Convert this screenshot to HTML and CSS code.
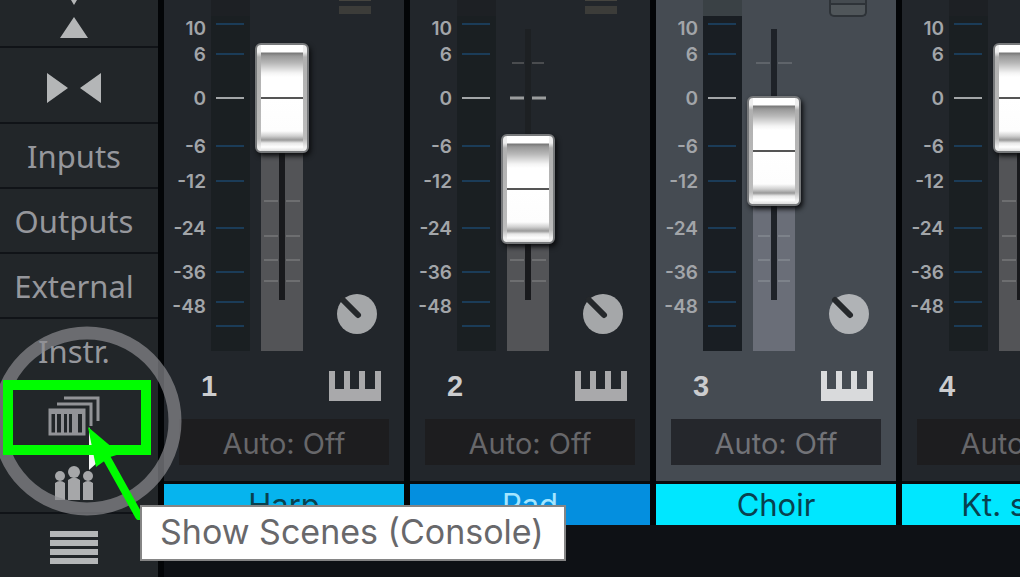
FILE: index.html
```html
<!DOCTYPE html>
<html lang="en">
<head>
<meta charset="utf-8">
<title>Console</title>
<link rel="stylesheet" href="styles.css">
</head>
<body>
<svg class="defs" aria-hidden="true">
  <symbol id="meter" viewBox="0 0 39 351">
    <g stroke="#1b3c58" stroke-width="2"><path d="M5 24h28M5 54h28M5 146h28M5 181h28M5 228h28M5 272h28M5 302h28M5 326h28"/></g>
    <path d="M5 98h28" stroke="#a3a6a8" stroke-width="2"/>
  </symbol>
  <symbol id="piano" viewBox="0 0 52 30">
    <path fill="currentColor" d="M0 0h6v18h9V0h6v18h9V0h6v18h10V0h6v30H0z"/>
  </symbol>
  <symbol id="dial" viewBox="0 0 40 40">
    <circle cx="20" cy="20" r="20" fill="currentColor"/>
    <path d="M6 6l15 15" stroke="#25282b" stroke-width="6" stroke-linecap="round"/>
  </symbol>
</svg>
<div class="console">
  <nav class="side" aria-label="Console views">
    <button class="side-btn top" aria-label="Collapse height"><svg width="30" height="40" viewBox="0 0 30 40"><path fill="#b4b6b7" d="M12 0h6l-3 5zM15 17l14 21H1z"/></svg></button>
    <button class="side-btn tall" aria-label="Narrow channels"><svg width="56" height="30" viewBox="0 0 56 30"><path fill="#b4b6b7" d="M1 0l21 15L1 30zM55 0v30L34 15z"/></svg></button>
    <button class="side-btn">Inputs</button>
    <button class="side-btn">Outputs</button>
    <button class="side-btn">External</button>
    <button class="side-btn plain">Instr.</button>
    <button class="side-btn plain" aria-label="Show scenes"><svg width="52" height="40" viewBox="0 0 52 40"><g fill="none" stroke="#929397" stroke-width="3"><path d="M16 2h34v23M9 8h34v22"/><rect x="2" y="14" width="34" height="24"/></g><path fill="#929397" d="M2 13h34v5H2zM7 17h2v20H7zM13 17h3v20h-3zM19 17h2v20h-2zM24 17h6v20h-6zM34 17h3v20h-3z"/></svg></button>
    <button class="side-btn low" aria-label="Groups"><svg width="38" height="34" viewBox="0 0 38 34"><g fill="#a6a7a9"><circle cx="5" cy="10" r="5"/><circle cx="19" cy="6" r="6"/><circle cx="33" cy="10" r="5"/><path d="M0 17q5-4 10 0v17H0zM13 14q6-5 12 0v20H13zM28 17q5-4 10 0v17H28z"/></g></svg></button>
    <button class="side-btn menu low" aria-label="Menu"><svg width="48" height="34" viewBox="0 0 48 34"><path fill="#b4b6b7" d="M0 0h48v6H0zM0 9h48v6H0zM0 18h48v6H0zM0 27h48v6H0z"/></svg></button>
  </nav>
  <main class="channels">
    <section class="channel">
      <div class="strip">
        <div class="scale"><span>10</span><span>6</span><span>0</span><span>-6</span><span>-12</span><span>-24</span><span>-36</span><span>-48</span></div>
        <svg class="meter"><use href="#meter"/></svg>
        <div class="fader">
          <svg class="track" viewBox="0 0 54 351"><path class="fill" d="M6 98h42v253H6z"/><path class="slot" d="M24 98h6v202h-6z"/><path class="marks" d="M9 201h14M31 201h14M9 236h14M31 236h14M9 260h14M31 260h14M9 281h14M31 281h14"/></svg>
          <input type="range" min="0" max="245" value="202" aria-label="Channel 1 level">
        </div>
        <div class="tools"><button class="list" aria-label="Channel options"></button><button class="dial" aria-label="Channel editor"><svg><use href="#dial"/></svg></button></div>
      </div>
      <div class="info"><span>1</span><svg class="piano"><use href="#piano"/></svg></div>
      <button class="auto">Auto: Off</button>
      <h2 class="name sky">Harp</h2>
    </section>
    <section class="channel">
      <div class="strip">
        <div class="scale"><span>10</span><span>6</span><span>0</span><span>-6</span><span>-12</span><span>-24</span><span>-36</span><span>-48</span></div>
        <svg class="meter"><use href="#meter"/></svg>
        <div class="fader">
          <svg class="track" viewBox="0 0 54 351"><path class="fill" d="M6 189h42v162H6z"/><path class="slot faint" d="M24 29h6v160h-6z"/><path class="slot" d="M24 189h6v111h-6z"/><path class="marks dim" d="M11 63h12M31 63h12"/><path class="marks" d="M9 260h14M31 260h14M9 281h14M31 281h14"/><path class="zero" d="M9 98h14M31 98h14"/></svg>
          <input type="range" min="0" max="245" value="111" aria-label="Channel 2 level">
        </div>
        <div class="tools"><button class="list" aria-label="Channel options"></button><button class="dial" aria-label="Channel editor"><svg><use href="#dial"/></svg></button></div>
      </div>
      <div class="info"><span>2</span><svg class="piano"><use href="#piano"/></svg></div>
      <button class="auto">Auto: Off</button>
      <h2 class="name blue">Pad</h2>
    </section>
    <section class="channel selected">
      <div class="strip">
        <div class="scale"><span>10</span><span>6</span><span>0</span><span>-6</span><span>-12</span><span>-24</span><span>-36</span><span>-48</span></div>
        <svg class="meter"><use href="#meter"/></svg>
        <div class="fader">
          <svg class="track" viewBox="0 0 54 351"><path class="fill" d="M6 151h42v200H6z"/><path class="slot" d="M24 29h6v271h-6z"/><path class="marks dim" d="M9 63h14M31 63h14"/><path class="marks" d="M11 236h12M31 236h12M11 260h12M31 260h12M11 281h12M31 281h12"/></svg>
          <input type="range" min="0" max="245" value="149" aria-label="Channel 3 level">
        </div>
        <div class="tools"><button class="list" aria-label="Channel options"></button><button class="dial" aria-label="Channel editor"><svg><use href="#dial"/></svg></button></div>
      </div>
      <div class="info"><span>3</span><svg class="piano"><use href="#piano"/></svg></div>
      <button class="auto">Auto: Off</button>
      <h2 class="name cyan">Choir</h2>
    </section>
    <section class="channel">
      <div class="strip">
        <div class="scale"><span>10</span><span>6</span><span>0</span><span>-6</span><span>-12</span><span>-24</span><span>-36</span><span>-48</span></div>
        <svg class="meter"><use href="#meter"/></svg>
        <div class="fader">
          <svg class="track" viewBox="0 0 54 351"><path class="fill" d="M6 98h42v253H6z"/><path class="slot" d="M24 98h6v202h-6z"/><path class="marks" d="M9 201h14M31 201h14M9 236h14M31 236h14M9 260h14M31 260h14M9 281h14M31 281h14"/></svg>
          <input type="range" min="0" max="245" value="202" aria-label="Channel 4 level">
        </div>
        <div class="tools"><button class="list" aria-label="Channel options"></button><button class="dial" aria-label="Channel editor"><svg><use href="#dial"/></svg></button></div>
      </div>
      <div class="info"><span>4</span><svg class="piano"><use href="#piano"/></svg></div>
      <button class="auto">Auto: Off</button>
      <h2 class="name cyan">Kt. strgs</h2>
    </section>
  </main>
</div>
<svg class="callout" width="190" height="200" viewBox="0 320 190 200" aria-hidden="true">
  <circle cx="87" cy="421" r="88" fill="none" stroke="#8e8e92" stroke-opacity=".68" stroke-width="13"/>
  <path fill="#f4f4f4" d="M89 427v43l9-8 3-10z"/>
  <rect x="8" y="385" width="138" height="65" fill="none" stroke="#00fd00" stroke-width="10"/>
  <path fill="#00fd00" d="M88 427l32 27-10 3-14 10z"/>
  <path d="M105 455l34 61" stroke="#00fd00" stroke-width="8" stroke-linecap="round"/>
</svg>
<div class="tooltip" role="tooltip">Show Scenes (Console)</div>
</body>
</html>
```
FILE: styles.css
```css
* { box-sizing: border-box; }
body {
  margin: 0;
  overflow: hidden;
  background: #0e1115;
  font-family: Inter, "Liberation Sans", sans-serif;
}
button {
  border: 0;
  padding: 0;
  background: none;
  color: inherit;
  font: inherit;
}
svg { display: block; }
.defs { position: absolute; width: 0; height: 0; }
.console {
  display: flex;
  min-height: 100vh;
}

/* Sidebar */
.side {
  display: flex;
  flex: none;
  flex-direction: column;
  width: 164px;
  border-right: 6px solid #030507;
  background: #222629;
  color: #96979c;
  font-family: "Noto Sans", "Open Sans", sans-serif;
  font-size: 31px;
  line-height: 36px;
}
.side-btn {
  display: flex;
  align-items: center;
  justify-content: center;
  height: 65px;
  padding-right: 10px;
  border-bottom: 2px solid #101317;
}
.side-btn.top { height: 48px; align-items: flex-start; }
.side-btn.tall { height: 76px; padding-top: 6px; }
.side-btn.plain { border-bottom-color: transparent; }
.side-btn.low { padding-top: 4px; }
.side-btn.menu { flex: 1; border: 0; }

/* Channel strips */
.channels {
  display: flex;
  flex: 1;
  gap: 6px;
  min-width: 0;
  align-items: flex-start;
  overflow: hidden;
}
.channel {
  display: flex;
  flex: none;
  flex-direction: column;
  width: 240px;
  background: #22262b;
  box-shadow: 6px 0 0 #030507;
}
.channel.selected { background: #454b52; }
.strip {
  display: grid;
  grid-template-columns: 42px 39px 54px 1fr;
  column-gap: 5px;
  height: 355px;
}
.scale {
  display: grid;
  grid-template-rows: 24px 28px 60px 36px 34px 60px 28px 40px;
  align-items: center;
  align-content: start;
  padding-top: 17px;
  color: #a2a5a9;
  font-size: 19px;
  font-weight: 600;
  line-height: 20px;
  text-align: right;
}
.meter {
  width: 39px;
  height: 351px;
  background: linear-gradient(#1d2024 16px, #1a1f22 16px);
}
.selected .meter { background: linear-gradient(#3a4145 16px, #191e23 16px); }
.fader {
  display: grid;
  height: 355px;
}
.track, .fader input { grid-area: 1 / 1; }
.track { width: 54px; height: 351px; }
.fill { fill: #535457; }
.slot { fill: #191a1d; }
.slot.faint { fill: #1d2023; }
.marks { stroke: #6d6e70; stroke-width: 2; }
.marks.dim { stroke: #4a4c4f; }
.zero { stroke: #9b9d9e; stroke-width: 3; }
.selected .slot { fill: #1e2228; }
.selected .fill { fill: #6a6e78; }
.selected .marks { stroke: #7d828a; }
.selected .marks.dim { stroke: #5f646a; }
.fader input {
  width: 54px;
  height: 355px;
  margin: 0;
  appearance: none;
  background: none;
  direction: rtl;
  writing-mode: vertical-lr;
}
.fader input::-webkit-slider-thumb {
  width: 54px;
  height: 110px;
  appearance: none;
  border: 2px solid #77797b;
  border-radius: 6px;
  background:
    linear-gradient(#fff 7px, #777 8px, #989898 11px, #b8b8b8 18px, #f4f4f4 28px, #fff 32px, #fff 52px, #555 52px, #555 54px, #fff 54px, #fdfdfd 86px, #d0d0d0 91px, #999 95px, #e8e8e8 98px, #fff 102px, #ddd 106px) center / 42px 100% no-repeat,
    linear-gradient(#eee 7px, #b0b0b0 12px, #bcbcbc 94px, #eee 102px);
  box-shadow: 2px 3px 5px #0b0c0e;
}
.tools {
  display: flex;
  flex-direction: column;
  justify-content: space-between;
  padding: 0 0 21px 23px;
}
.list {
  width: 32px;
  height: 14px;
  margin-left: 2px;
  background: linear-gradient(#45443f 1px, transparent 1px, transparent 6px, #3c3c39 6px);
}
.selected .list {
  width: 38px;
  height: 17px;
  margin-left: 0;
  border: 2px solid #2e3338;
  border-top: 0;
  border-radius: 0 0 5px 5px;
  background: linear-gradient(#454b50 3px, #2e3338 3px, #2e3338 5px, #50565a 5px);
}
.dial { width: 40px; height: 40px; color: #a5a7a9; }
.dial svg { width: 40px; height: 40px; }
.selected .dial { color: #b0b3b6; }
.info {
  display: flex;
  align-items: center;
  justify-content: space-between;
  height: 64px;
  padding: 0 23px 2px 37px;
  color: #cbccce;
  font-size: 29px;
  font-weight: 700;
  line-height: 32px;
}
.info span { font-family: "Liberation Sans", sans-serif; }
.piano { width: 52px; height: 30px; color: #a9a9ab; }
.selected .piano { color: #d9dadc; }
.auto {
  height: 46px;
  margin: 0 15px 16px;
  padding-top: 4px;
  background: #1d1d1f;
  color: #67676a;
  font-size: 29px;
  line-height: 32px;
}
.selected .auto { background: #25272c; color: #727378; }
.name {
  height: 44px;
  margin: 0;
  border-top: 3px solid #080b0e;
  background-clip: padding-box;
  color: #08414f;
  font-size: 31px;
  font-weight: 400;
  line-height: 41px;
  text-align: center;
}
.sky { background-color: #06b4ee; }
.blue { background-color: #048fdf; color: #a5e6ff; }
.cyan { background-color: #00e7ff; }

/* Overlays */
.callout { position: absolute; top: 320px; left: 0; pointer-events: none; }
.tooltip {
  position: absolute;
  top: 505px;
  left: 140px;
  padding: 6px 20px 8px 18px;
  border: 2px solid #858585;
  background: #fff;
  color: #68686b;
  font-size: 34px;
  line-height: 38px;
  white-space: nowrap;
}
```
